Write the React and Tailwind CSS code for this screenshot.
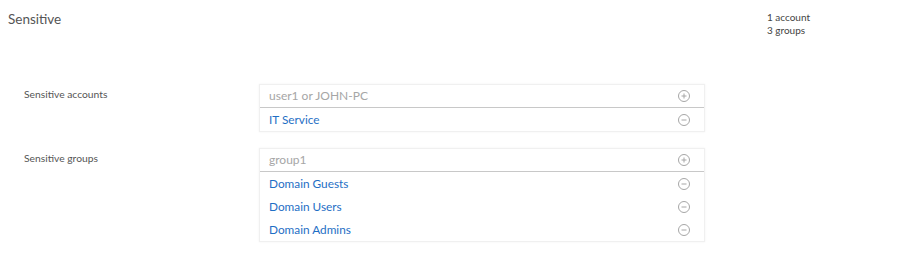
import React from 'react';

const CircleIcon = ( { plus } ) => (
	<svg width="12" height="12" viewBox="0 0 12 12" fill="none" stroke="#a6a6a6" strokeWidth="1">
		<circle cx="6" cy="6" r="5.5" />
		<line x1="3.5" y1="6" x2="8.5" y2="6" />
		{ plus && <line x1="6" y1="3.5" x2="6" y2="8.5" /> }
	</svg>
);

const ItemList = ( { placeholder, items } ) => (
	<div className="w-[446px] border border-[#f0f0f0] bg-white shadow-[0_0_2px_rgba(0,0,0,0.06)]">
		<div className="flex h-[23px] items-center justify-between border-b border-[#c8c8c8] pl-[9px] pr-[14px]">
			<span className="text-[12px] text-[#a6a6a6]">{ placeholder }</span>
			<CircleIcon plus />
		</div>
		{ items.map( ( item ) => (
			<div key={ item } className="flex h-[23px] items-center justify-between pl-[9px] pr-[14px]">
				<span className="text-[11.8px] text-[#1f6fc5]">{ item }</span>
				<CircleIcon />
			</div>
		) ) }
	</div>
);

const App = () => {
	return (
		<div className="h-[266px] w-[906px] bg-white font-['Lato',sans-serif] text-[#555]">
			<div className="flex justify-between pl-2 pr-[96px] pt-[10px]">
				<h2 className="text-[13.5px] leading-[18px] text-[#555]">Sensitive</h2>
				<div className="pt-[1px] text-[10px] leading-[13px] text-[#444]">
					<div>1 account</div>
					<div>3 groups</div>
				</div>
			</div>

			<div className="mt-[47px] flex flex-col gap-4 pl-6">
				<div className="flex">
					<div className="w-[235px] pt-[3px] text-[10.3px] text-[#555]">Sensitive accounts</div>
					<ItemList placeholder="user1 or JOHN-PC" items={ [ 'IT Service' ] } />
				</div>
				<div className="flex">
					<div className="w-[235px] pt-[3px] text-[10.3px] text-[#555]">Sensitive groups</div>
					<ItemList placeholder="group1" items={ [ 'Domain Guests', 'Domain Users', 'Domain Admins' ] } />
				</div>
			</div>
		</div>
	);
};

export default App;
